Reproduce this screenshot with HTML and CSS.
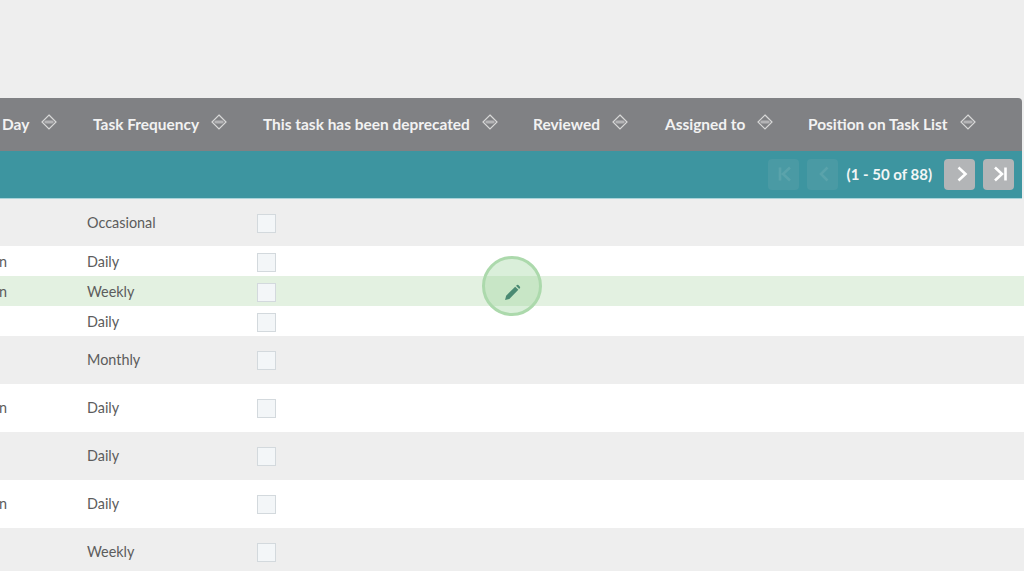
FILE: index.html
```html
<!DOCTYPE html>
<html lang="en">
<head>
<meta charset="utf-8">
<title>Tasks</title>
<link rel="stylesheet" href="styles.css">
</head>
<body>
<svg class="defs" width="0" height="0" aria-hidden="true">
  <symbol id="sort" viewBox="0 0 16 16">
    <path d="M8 1 L15 8 L8 15 L1 8 Z" fill="none" stroke="#d8d8d8" stroke-width="1.2"/>
    <path d="M4.5 6.5 H11.5 L13 8 L11.5 9.5 H4.5 L3 8 Z" fill="#b4b4b6"/>
  </symbol>
</svg>
<main class="table">
  <div class="head grid">
    <div class="th first">Day <svg class="sort"><use href="#sort"/></svg></div>
    <div class="th">Task Frequency <svg class="sort"><use href="#sort"/></svg></div>
    <div class="th">This task has been deprecated <svg class="sort"><use href="#sort"/></svg></div>
    <div class="th">Reviewed <svg class="sort"><use href="#sort"/></svg></div>
    <div class="th">Assigned to <svg class="sort"><use href="#sort"/></svg></div>
    <div class="th">Position on Task List <svg class="sort"><use href="#sort"/></svg></div>
  </div>
  <div class="pager">
    <button class="pg off"><svg viewBox="0 0 20 20"><path d="M7 3.5 V16.5 M17 3.5 L10 10 L17 16.5" /></svg></button>
    <button class="pg off"><svg viewBox="0 0 20 20"><path d="M15.5 3.5 L9 10 L15.5 16.5" /></svg></button>
    <span class="count">(1 - 50 of 88)</span>
    <button class="pg on"><svg viewBox="0 0 20 20"><path d="M8.5 3.5 L15.5 10 L8.5 16.5" /></svg></button>
    <button class="pg on"><svg viewBox="0 0 20 20"><path d="M6 3.5 L13 10 L6 16.5 M16.5 3.5 V16.5" /></svg></button>
  </div>
  <div class="row grid first-row grey"><div></div><div class="td">Occasional</div><div class="td"><span class="check"></span></div></div>
  <div class="row grid short white"><div class="td clip">n</div><div class="td">Daily</div><div class="td"><span class="check"></span></div></div>
  <div class="row grid short green"><div class="td clip">n</div><div class="td">Weekly</div><div class="td"><span class="check"></span></div></div>
  <div class="row grid short white"><div></div><div class="td">Daily</div><div class="td"><span class="check"></span></div></div>
  <div class="row grid tall grey"><div></div><div class="td">Monthly</div><div class="td"><span class="check"></span></div></div>
  <div class="row grid tall white"><div class="td clip">n</div><div class="td">Daily</div><div class="td"><span class="check"></span></div></div>
  <div class="row grid tall grey"><div></div><div class="td">Daily</div><div class="td"><span class="check"></span></div></div>
  <div class="row grid tall white"><div class="td clip">n</div><div class="td">Daily</div><div class="td"><span class="check"></span></div></div>
  <div class="row grid tall grey"><div></div><div class="td">Weekly</div><div class="td"><span class="check"></span></div></div>
</main>
<div class="pulse">
  <svg viewBox="0 0 16 16" width="17" height="17"><path d="M1 15 L2 11 L10.5 2.5 L13.5 5.5 L5 14 Z M11.3 1.7 L12.3 0.9 Q12.9 0.5 13.5 1 L15 2.5 Q15.5 3.1 15 3.7 L14.3 4.7 Z" fill="#4a8a72"/></svg>
</div>
</body>
</html>
```
FILE: styles.css
```css
* { box-sizing: border-box; }
html, body { margin: 0; height: 100%; }
body {
  background: #eeeeee;
  font-family: Lato, "Open Sans", sans-serif;
  overflow: hidden;
  padding-top: 98px;
}
.defs { display: block; height: 0; }
.grid {
  display: grid;
  grid-template-columns: 87px 170px 270px 132px 143px 1fr;
}
.head {
  height: 53px;
  width: 1022px;
  background: #808184;
  border-radius: 0 4px 0 0;
  color: #f2f2f2;
  font-size: 15.45px;
  font-weight: 700;
}
.th {
  display: flex;
  align-items: center;
  padding: 0 0 2px 6px;
  white-space: nowrap;
  gap: 12px;
}
.th.first { padding-left: 2px; }
.sort { width: 16px; height: 16px; margin-top: -4px; flex: none; }
.pager {
  width: 1022px;
  height: 48px;
  background: #3d95a0;
  border-bottom: 1px solid #a9d3d9;
  display: flex;
  align-items: center;
  justify-content: flex-end;
  padding: 0 8px 1px 0;
  gap: 8px;
}
.count {
  color: #f2f6f6;
  font-size: 15px;
  font-weight: 700;
  margin: 0 4px 0 1px;
}
.pg {
  width: 31px;
  height: 31px;
  padding: 0;
  border: 0;
  border-radius: 4px;
  display: flex;
  align-items: center;
  justify-content: center;
}
.pg svg { width: 20px; height: 20px; fill: none; stroke-width: 2.6; }
.pg.on { background: #b3b5b7; }
.pg.on svg { stroke: #ffffff; }
.pg.off { background: #4a9aa4; }
.pg.off svg { stroke: #5aa3ab; }
.row { color: #5c5c5c; font-size: 14.4px; }
.first-row { height: 47px; }
.tall { height: 48px; }
.short { height: 30px; }
.grey { background: #eeeeee; }
.white { background: #ffffff; }
.green { background: #e3f1e1; }
.td { display: flex; align-items: center; }
.tall .td { padding-bottom: 2px; }
.clip { margin-left: -1px; }
.check {
  width: 19px;
  height: 19px;
  background: #f3f6f8;
  border: 1px solid #d3d9dd;
  display: block;
  margin-top: 2px;
}
.pulse {
  position: absolute;
  left: 482px;
  top: 256px;
  width: 60px;
  height: 60px;
  border-radius: 50%;
  background: rgba(150, 210, 150, 0.35);
  border: 3px solid #acd9ac;
  display: flex;
  align-items: center;
  justify-content: center;
  padding: 12px 0 0 0;
}
```
